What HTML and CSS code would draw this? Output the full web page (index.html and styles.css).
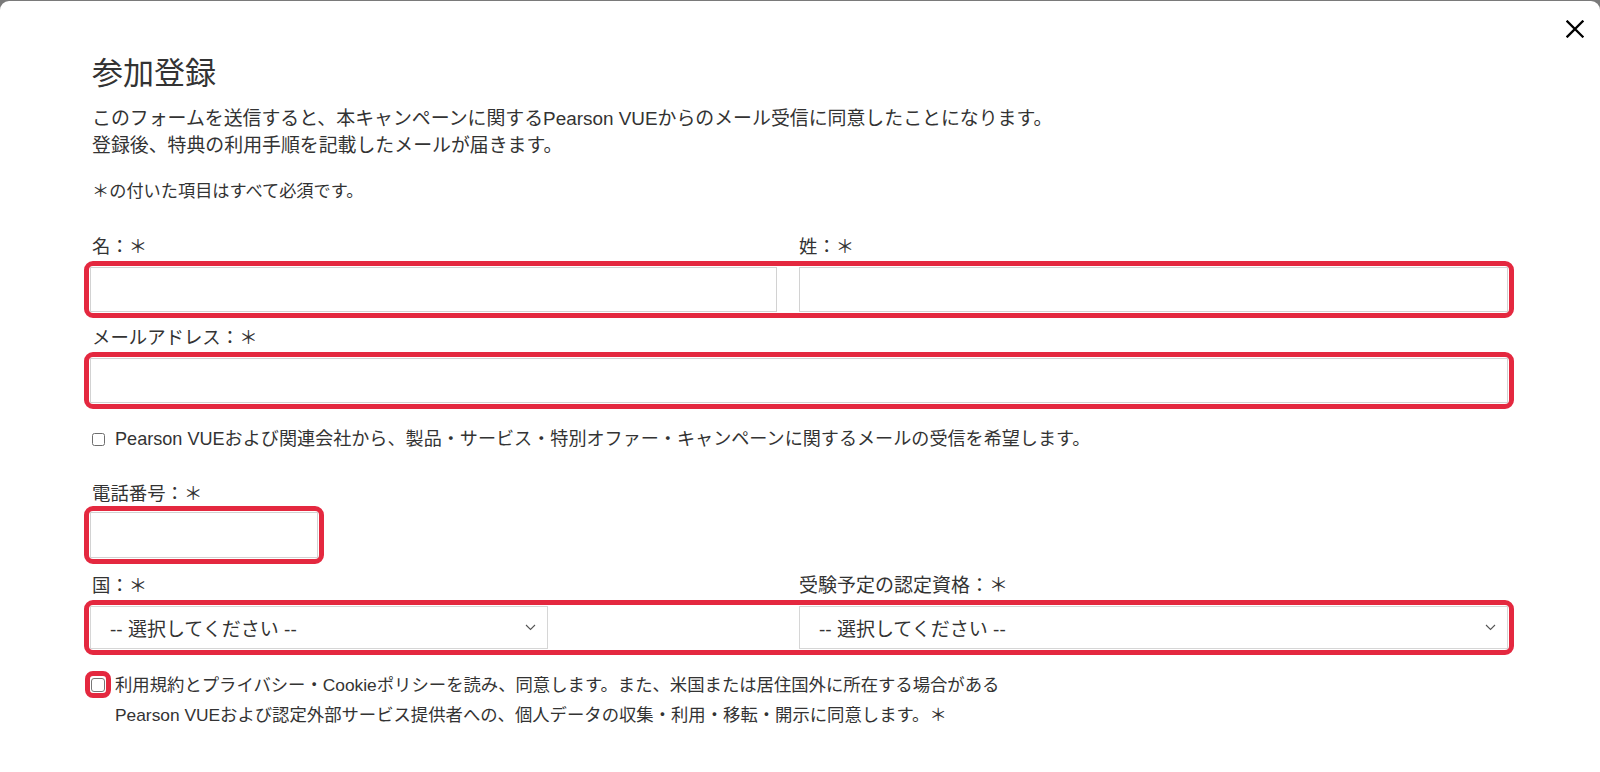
FILE: index.html
```html
<!DOCTYPE html>
<html lang="ja">
<head>
<meta charset="utf-8">
<title>参加登録</title>
<link rel="stylesheet" href="styles.css">
</head>
<body>
<div class="modal">
  <button class="close" type="button" aria-label="閉じる">
    <svg width="18" height="18" viewBox="0 0 18 18"><path d="M1.5 1.5 L16.5 16.5 M16.5 1.5 L1.5 16.5" stroke="#000" stroke-width="2.3" stroke-linecap="square" fill="none"/></svg>
  </button>
  <form class="form">
    <h1 class="title">参加登録</h1>
    <p class="intro">このフォームを送信すると、本キャンペーンに関するPearson VUEからのメール受信に同意したことになります。<br>登録後、特典の利用手順を記載したメールが届きます。</p>
    <p class="note">＊の付いた項目はすべて必須です。</p>

    <div class="grid2 labels labels-first">
      <label class="label">名：＊</label>
      <label class="label label-right">姓：＊</label>
    </div>
    <div class="box grid2 row-name">
      <input class="input input-short" type="text">
      <input class="input" type="text">
    </div>

    <label class="label label-block">メールアドレス：＊</label>
    <div class="box row-mail">
      <input class="input input-mail" type="text">
    </div>

    <div class="optin">
      <span class="check"></span>
      <span>Pearson VUEおよび関連会社から、製品・サービス・特別オファー・キャンペーンに関するメールの受信を希望します。</span>
    </div>

    <label class="label label-block label-phone">電話番号：＊</label>
    <div class="box row-phone">
      <input class="input input-phone" type="text">
    </div>

    <div class="grid2 labels labels-country">
      <label class="label">国：＊</label>
      <label class="label label-right label-wide">受験予定の認定資格：＊</label>
    </div>
    <div class="box grid2 row-select">
      <div class="select select-short"><span>-- 選択してください --</span><svg width="11" height="7" viewBox="0 0 11 7"><path d="M1 1 L5.5 5.5 L10 1" stroke="#555" stroke-width="1.1" fill="none"/></svg></div>
      <div class="select"><span>-- 選択してください --</span><svg width="11" height="7" viewBox="0 0 11 7"><path d="M1 1 L5.5 5.5 L10 1" stroke="#555" stroke-width="1.1" fill="none"/></svg></div>
    </div>

    <div class="consent">
      <span class="consent-box"><span class="check check-lg"></span></span>
      <p class="consent-text">利用規約とプライバシー・Cookieポリシーを読み、同意します。また、米国または居住国外に所在する場合がある<br>Pearson VUEおよび認定外部サービス提供者への、個人データの収集・利用・移転・開示に同意します。＊</p>
    </div>
  </form>
</div>
</body>
</html>
```

FILE: styles.css
```css
* { box-sizing: border-box; }

html, body {
  margin: 0;
  padding: 0;
  height: 100%;
}

body {
  background: #7a7a7a;
  font-family: "Liberation Sans", "Noto Sans CJK JP", sans-serif;
  font-size: 18.4px;
  color: #333;
  overflow: hidden;
}

.modal {
  position: relative;
  margin-top: 1px;
  background: #fff;
  border-radius: 9px 9px 0 0;
  height: 771px;
}

.close {
  position: absolute;
  top: 19px;
  right: 16px;
  width: 18px;
  height: 18px;
  padding: 0;
  border: 0;
  background: none;
  display: flex;
}

.form {
  padding: 54px 92px 0 90px;
}

.title {
  margin: 0;
  padding-left: 2px;
  font-size: 31px;
  font-weight: 400;
  line-height: 37px;
  color: #333;
}

.intro {
  margin: 12.5px 0 0;
  padding-left: 2px;
  font-size: 18.9px;
  line-height: 27.5px;
}

.note {
  margin: 19px 0 0;
  padding-left: 2px;
  font-size: 17.2px;
  line-height: 24px;
}

.grid2 {
  display: grid;
  grid-template-columns: 1fr 1fr;
}

.labels-first { margin-top: 30.5px; }
.labels-country { margin-top: 14px; }

.label {
  display: block;
  padding-left: 2px;
  line-height: 27.5px;
}

.label-right { padding-left: 0; }
.label-wide { font-size: 19px; }

.label-block { margin-top: 12.5px; }
.label-phone { margin-top: 26.5px; }

.box {
  margin-top: 6px;
  outline: 5px solid #e4283f;
  outline-offset: 1px;
  border-radius: 3px;
}

.row-phone {
  margin-top: 4.5px;
  width: 228px;
}

.row-select { margin-top: 6.5px; }

.input {
  display: block;
  width: 100%;
  height: 45px;
  margin: 0;
  padding: 0 10px;
  border: 1px solid #d2d2d2;
  border-radius: 0;
  background: #fff;
  font: inherit;
}

.input-short { width: calc(100% - 22px); }
.input-mail { height: 45.5px; }
.input-phone { height: 46px; }

.optin {
  display: flex;
  align-items: center;
  gap: 10px;
  margin-top: 23px;
  padding-left: 2px;
  font-size: 18.1px;
  line-height: 27.5px;
}

.check {
  display: inline-block;
  flex: none;
  width: 13px;
  height: 13px;
  border: 1px solid #6e6e6e;
  border-radius: 2.5px;
  background: #fff;
}

.select {
  display: flex;
  align-items: center;
  justify-content: space-between;
  height: 43px;
  padding: 0 11px 0 19px;
  border: 1px solid #d6d6d6;
  background: #fff;
  color: #333;
  font-size: 19px;
}

.select-short { width: 458px; }

.select svg { flex: none; }

.consent {
  display: flex;
  align-items: flex-start;
  gap: 9px;
  margin-top: 20.5px;
}

.consent-box {
  flex: none;
  display: flex;
  align-items: center;
  justify-content: center;
  width: 16.5px;
  height: 17px;
  margin-top: 6.8px;
  margin-left: -0.5px;
  outline: 5px solid #e4283f;
  outline-offset: 0.5px;
  border-radius: 3px;
}

.check-lg {
  width: 14.5px;
  height: 14.5px;
  border-color: #777;
  border-radius: 3px;
}

.consent-text {
  margin: 0;
  font-size: 17.35px;
  line-height: 30.6px;
}
```
